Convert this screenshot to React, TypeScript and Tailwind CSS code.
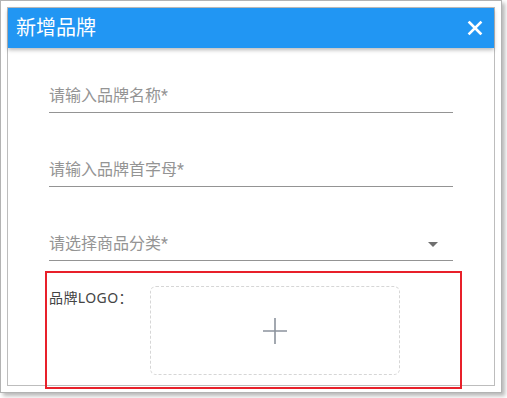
const fields = ['请输入品牌名称*', '请输入品牌首字母*']

export default function App() {
  return (
    <div
      className="relative w-[507px] h-[398px] bg-white"
      style={{ fontFamily: 'Roboto, "Noto Sans CJK SC", sans-serif' }}
    >
      {/* Dialog window */}
      <div className="w-[502px] h-[393px] border border-[#b3b3b3] bg-white p-[6px] shadow-[3px_3px_4px_rgba(0,0,0,0.28)]">
        <div className="h-[379px] border border-[#bdbdbd] bg-white flex flex-col">
          {/* Header */}
          <div className="h-[40px] shrink-0 bg-[#2196f3] flex items-center justify-between pl-[8px] pr-[11px] shadow-[0_2px_4px_rgba(0,0,0,0.28)]">
            <span className="text-white text-[20px] leading-none">新增品牌</span>
            <svg width="16" height="16" viewBox="0 0 16 16">
              <path d="M2.5 2.5 L13.5 13.5 M13.5 2.5 L2.5 13.5" stroke="white" strokeWidth="2.6" strokeLinecap="square" />
            </svg>
          </div>

          {/* Body */}
          <div className="flex flex-col pl-[41px] pr-[41px] pt-[32px] gap-[41px]">
            {fields.map((f) => (
              <div key={f} className="h-[33px] border-b border-[#949494] flex items-center">
                <span className="text-[16px] text-[#949494]">{f}</span>
              </div>
            ))}
            <div className="h-[33px] border-b border-[#949494] flex items-center justify-between">
              <span className="text-[16px] text-[#949494]">请选择商品分类*</span>
              <svg width="10" height="5" viewBox="0 0 10 5" className="mr-[15px]">
                <path d="M0 0 L10 0 L5 5 Z" fill="#6f6f6f" />
              </svg>
            </div>
          </div>

          {/* Logo upload */}
          <div className="flex pl-[41px] pt-[25px]">
            <div
              className="w-[101px] pt-[2px] text-[14px] leading-[20px] text-[#444] tracking-[0.4px]"
              style={{ fontFamily: '"Noto Sans", "Noto Sans CJK SC", sans-serif' }}
            >
              品牌LOGO：
            </div>
            <div className="w-[250px] h-[89px] border border-dashed border-[#d6d6d6] rounded-[6px] flex items-center justify-center">
              <svg width="24" height="26" viewBox="0 0 24 26">
                <path d="M12 0 V26 M0 13 H24" stroke="#8c939d" strokeWidth="1.6" />
              </svg>
            </div>
          </div>
        </div>
      </div>

      {/* Red highlight annotation */}
      <div className="absolute left-[45px] top-[271px] w-[417px] h-[118px] border-2 border-[#e8202a]" />
    </div>
  )
}
